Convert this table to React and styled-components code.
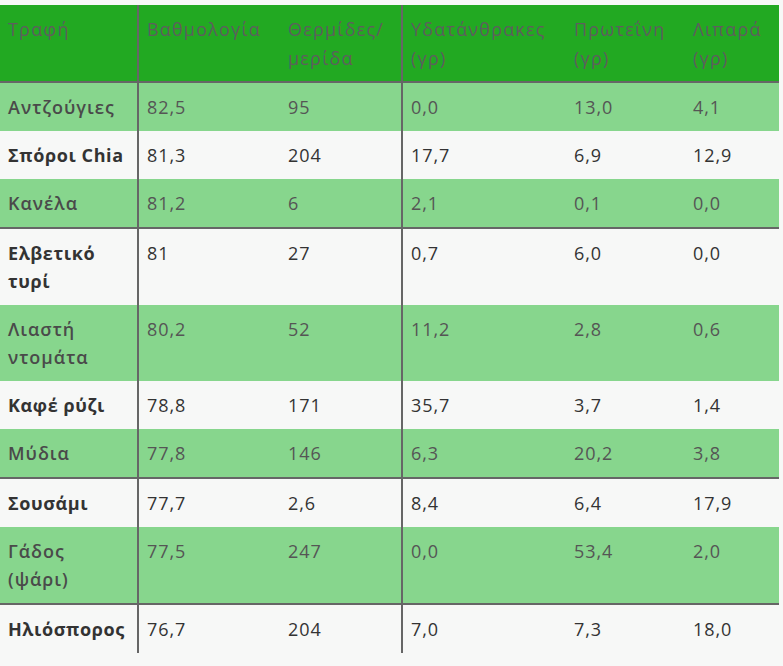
import React from 'react';
import styled, { createGlobalStyle } from 'styled-components';

const GlobalStyle = createGlobalStyle`
  html, body {
    margin: 0;
    padding: 0;
    background: #f7f8f7;
  }
`;

const Page = styled.div`
  padding-top: 5px;
  width: 779px;
  font-family: "Open Sans", "Noto Sans", sans-serif;
`;

const Table = styled.table`
  width: 779px;
  border-collapse: collapse;
  table-layout: fixed;
`;

const Col = styled.col`
  width: ${(p) => p.$w}px;
`;

const HeadRow = styled.tr`
  background: #22a922;
  border-bottom: 2px solid #666;
`;

const Th = styled.th`
  text-align: left;
  vertical-align: top;
  font-weight: 400;
  font-size: 18px;
  letter-spacing: 1.2px;
  line-height: 29px;
  color: #5e5e5e;
  padding: 10px 2px 8px 8px;
  border-right: ${(p) => (p.$rule ? '2px solid #666' : 'none')};
`;

const Row = styled.tr`
  background: ${(p) => (p.$green ? '#87d68d' : '#f7f8f7')};
  border-bottom: ${(p) => (p.$rule ? '2px solid #666' : 'none')};
`;

const Td = styled.td`
  vertical-align: top;
  font-size: 18px;
  letter-spacing: 0.9px;
  line-height: 28px;
  padding: 10px 2px 10px 8px;
  color: ${(p) => (p.$green ? '#555' : '#333')};
  font-weight: 400;
  border-right: ${(p) => (p.$rule ? '2px solid #666' : 'none')};
`;

const Name = styled(Td)`
  padding-right: 10px;
  font-weight: ${(p) => (p.$green ? 600 : 700)};
  letter-spacing: ${(p) => (p.$green ? '1px' : '0.6px')};
  color: ${(p) => (p.$green ? '#4a4a4a' : '#333')};
`;

const heads = ['Τραφή', 'Βαθμολογία', 'Θερμίδες/ μερίδα', 'Υδατάνθρακες (γρ)', 'Πρωτεΐνη (γρ)', 'Λιπαρά (γρ)'];
const widths = [138, 142, 122, 164, 119, 94];
const ruled = [true, false, true, false, false, false];

const rows = [
  ['Αντζούγιες', '82,5', '95', '0,0', '13,0', '4,1'],
  ['Σπόροι Chia', '81,3', '204', '17,7', '6,9', '12,9'],
  ['Κανέλα', '81,2', '6', '2,1', '0,1', '0,0', true],
  ['Ελβετικό τυρί', '81', '27', '0,7', '6,0', '0,0'],
  ['Λιαστή ντομάτα', '80,2', '52', '11,2', '2,8', '0,6'],
  ['Καφέ ρύζι', '78,8', '171', '35,7', '3,7', '1,4'],
  ['Μύδια', '77,8', '146', '6,3', '20,2', '3,8', true],
  ['Σουσάμι', '77,7', '2,6', '8,4', '6,4', '17,9'],
  ['Γάδος (ψάρι)', '77,5', '247', '0,0', '53,4', '2,0', true],
  ['Ηλιόσπορος', '76,7', '204', '7,0', '7,3', '18,0'],
];

const App = () => {
  return (
    <Page>
      <GlobalStyle />
      <Table>
        <colgroup>
          {widths.map((w, i) => (
            <Col key={i} $w={w} />
          ))}
        </colgroup>
        <thead>
          <HeadRow>
            {heads.map((h, i) => (
              <Th key={h} $rule={ruled[i]}>{h}</Th>
            ))}
          </HeadRow>
        </thead>
        <tbody>
          {rows.map((r, idx) => {
            const green = idx % 2 === 0;
            const [name, ...vals] = r.slice(0, 6);
            return (
              <Row key={name} $green={green} $rule={r[6]}>
                <Name $green={green} $rule>{name}</Name>
                {vals.map((v, i) => (
                  <Td key={i} $green={green} $rule={ruled[i + 1]}>{v}</Td>
                ))}
              </Row>
            );
          })}
        </tbody>
      </Table>
    </Page>
  );
};

export default App;
